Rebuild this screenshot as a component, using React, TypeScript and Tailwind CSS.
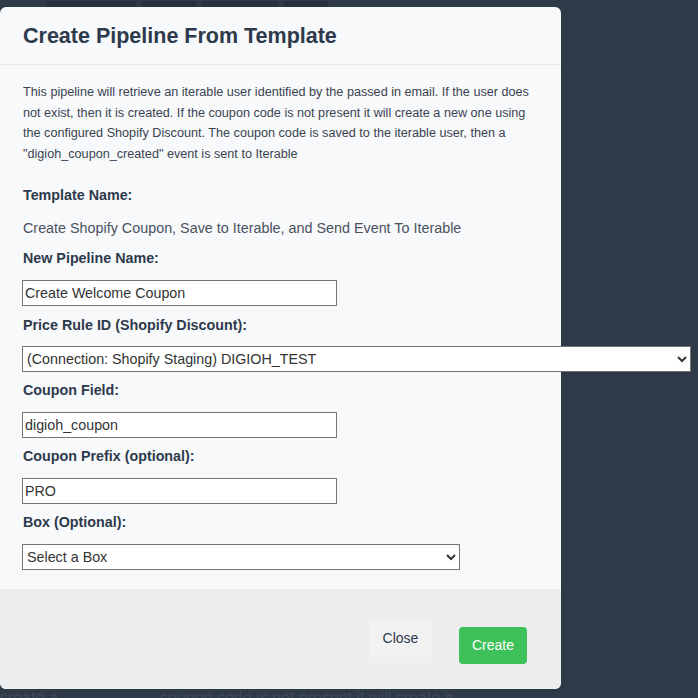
import React from "react";

const font = { fontFamily: '"Liberation Sans", Arial, sans-serif' };

function Label({ children, className = "" }: { children: React.ReactNode; className?: string }) {
  return (
    <div className={`text-[14.3px] leading-[20px] font-bold text-[#2d3a4b] ${className}`}>{children}</div>
  );
}

export default function App() {
  return (
    <div
      className="relative w-[698px] h-[698px] overflow-hidden bg-[#2f3a48]"
      style={font}
    >
      {/* background page */}
      <div className="flex gap-[5px] pl-[46px] pt-[1px]">
        <div className="w-[90px] h-[14px] rounded-[4px] bg-[#2a303e]" />
        <div className="w-[56px] h-[14px] rounded-[4px] bg-[#2a303e]" />
        <div className="w-[76px] h-[14px] rounded-[4px] bg-[#2a303e]" />
        <div className="w-[46px] h-[14px] rounded-[4px] bg-[#2a303e]" />
      </div>
      <div className="absolute left-0 top-[686px] flex text-[16px] text-[#3e4958] whitespace-nowrap">
        <span className="w-[160px]">create a</span>
        <span>coupon code is not present it will create a</span>
      </div>

      {/* modal */}
      <div className="absolute left-0 top-[7px] w-[561px] rounded-[6px] bg-[#f8f9fb]">
        <div className="h-[58px] flex items-center px-[23px] border-b border-[#e6e8ec]">
          <h1 className="text-[21.5px] font-bold text-[#2d3a4b] leading-none mt-[2px]">
            Create Pipeline From Template
          </h1>
        </div>
        <div className="pt-[17px] pb-[19px] px-[22px]">
          <p className="text-[12.65px] leading-[20.5px] text-[#3a4350] pl-[1px] pr-[4px]">
            This pipeline will retrieve an iterable user identified by the passed in email. If the user does not exist, then it is created. If the coupon code is not present it will create a new one using the configured Shopify Discount. The coupon code is saved to the iterable user, then a "digioh_coupon_created" event is sent to Iterable
          </p>
          <Label className="mt-[21px] pl-[1px]">Template Name:</Label>
          <div className="mt-[13px] text-[14.35px] leading-[20px] text-[#4a5260] pl-[1px]">
            Create Shopify Coupon, Save to Iterable, and Send Event To Iterable
          </div>
          <Label className="mt-[10px] pl-[1px]">New Pipeline Name:</Label>
          <input
            className="mt-[12px] block w-[315px] h-[26px] border border-[#767676] bg-white px-[2px] text-[14.3px] text-[#333]"
            defaultValue="Create Welcome Coupon"
          />
          <Label className="mt-[9px] pl-[1px]">Price Rule ID (Shopify Discount):</Label>
          <select
            className="mt-[11px] block w-[669px] h-[26px] border border-[#767676] bg-white text-[14.3px] text-[#333]"
            defaultValue="a"
          >
            <option value="a">(Connection: Shopify Staging) DIGIOH_TEST</option>
          </select>
          <Label className="mt-[8px] pl-[1px]">Coupon Field:</Label>
          <input
            className="mt-[12px] block w-[315px] h-[26px] border border-[#767676] bg-white px-[2px] text-[14.3px] text-[#333]"
            defaultValue="digioh_coupon"
          />
          <Label className="mt-[8px] pl-[1px]">Coupon Prefix (optional):</Label>
          <input
            className="mt-[12px] block w-[315px] h-[26px] border border-[#767676] bg-white px-[2px] text-[14.3px] text-[#333]"
            defaultValue="PRO"
          />
          <Label className="mt-[8px] pl-[1px]">Box (Optional):</Label>
          <select
            className="mt-[12px] block w-[438px] h-[26px] border border-[#767676] bg-white text-[14.3px] text-[#333]"
            defaultValue=""
          >
            <option value="">Select a Box</option>
          </select>
        </div>
        <div className="h-[100px] rounded-b-[6px] bg-[#edeef0] flex justify-end items-start pt-[31px] pr-[34px] gap-[28px]">
          <button className="w-[61px] h-[37px] rounded-[4px] bg-[#f2f2f3] text-[14px] text-[#2d3a4b]">
            Close
          </button>
          <button className="mt-[7px] w-[68px] h-[37px] rounded-[4px] bg-[#3dc158] text-[14px] text-white">
            Create
          </button>
        </div>
      </div>
    </div>
  );
}
